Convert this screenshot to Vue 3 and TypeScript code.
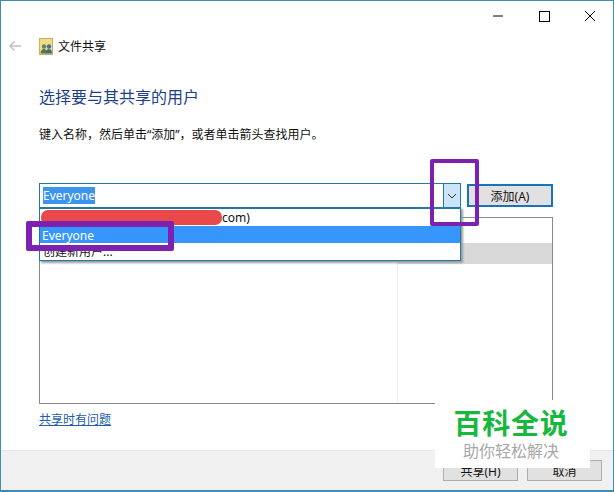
<template>
  <div class="window">
    <div class="title-bar">
      <svg class="win-btn" width="46" height="30" viewBox="0 0 46 30"><path d="M18 15h10" stroke="#000" stroke-width="1" fill="none" /></svg>
      <svg class="win-btn" width="46" height="30" viewBox="0 0 46 30"><rect x="18.5" y="10.5" width="10" height="10" stroke="#000" fill="none" /></svg>
      <svg class="win-btn" width="46" height="30" viewBox="0 0 46 30"><path d="M18 10l10 10M28 10l-10 10" stroke="#000" fill="none" /></svg>
    </div>
    <div class="nav-row">
      <svg class="back" width="14" height="12" viewBox="0 0 14 12"><path d="M13 6H2M6.5 1.5L2 6l4.5 4.5" stroke="#c4c0c4" stroke-width="1.6" fill="none" /></svg>
      <svg class="share-icon" width="14" height="17" viewBox="0 0 14 17">
        <rect x="0.5" y="0.5" width="13" height="16" fill="#f2dc8c" stroke="#c9b25c" />
        <circle cx="5" cy="8.500" r="2.200" fill="#6c7f63" />
        <circle cx="10" cy="8.500" r="2.200" fill="#4d6f86" />
        <path d="M1.500 15.500c0-3 1.500-4.500 3.500-4.500s3 1.500 3 4.500z" fill="#55794f" />
        <path d="M6.500 15.500c0-3 1.500-4.500 3.500-4.500s3 1.500 3 4.500z" fill="#3f6a88" />
      </svg>
      <span class="nav-title">文件共享</span>
    </div>
    <div class="content">
      <h1 class="heading">选择要与其共享的用户</h1>
      <p class="hint">键入名称，然后单击“添加”，或者单击箭头查找用户。</p>
      <div class="picker-row">
        <div class="combo">
          <span class="selected-text">Everyone</span>
          <div class="combo-arrow">
            <svg width="10" height="6" viewBox="0 0 10 6"><path d="M1 1l4 4 4-4" stroke="#333" fill="none" /></svg>
          </div>
          <div class="dropdown">
            <div class="option first">
              <span class="scribble"></span>
              <span>com)</span>
            </div>
            <div class="option active">Everyone</div>
            <div class="option cjk">创建新用户...</div>
          </div>
        </div>
        <button class="add-btn">添加(A)</button>
      </div>
      <div class="list-box">
        <div class="col-name"></div>
        <div class="col-level">
          <div class="row-blank"></div>
          <div class="row-gray"></div>
        </div>
      </div>
      <a class="help-link">共享时有问题</a>
    </div>
    <div class="footer">
      <button class="foot-btn">共享(H)</button>
      <button class="foot-btn">取消</button>
    </div>

    <!-- annotations painted over the screenshot -->
    <div class="mark mark-arrow"></div>
    <div class="mark mark-item"></div>
    <div class="watermark">
      <div class="wm-title">百科全说</div>
      <div class="wm-sub">助你轻松解决</div>
    </div>
  </div>
</template>

<script setup lang="ts">
</script>

<style>
html,
body {
  margin: 0;
  background: #fff;
}
</style>

<style scoped>
.window {
  position: relative;
  box-sizing: border-box;
  width: 614px;
  height: 492px;
  display: flex;
  flex-direction: column;
  border: 1px solid #3f8cae;
  border-bottom-width: 2px;
  background: #fff;
  overflow: hidden;
  font-family: "Noto Sans", "Noto Sans CJK SC", sans-serif;
  font-size: 12px;
  color: #111;
}

.title-bar {
  display: flex;
  justify-content: flex-end;
  height: 30px;
  flex-shrink: 0;
}

.nav-row {
  display: flex;
  align-items: center;
  height: 30px;
  padding-left: 7px;
}

.back {
  margin-right: 17px;
}

.share-icon {
  margin-right: 5px;
}

.nav-title {
  font-size: 12px;
}

.content {
  flex: 1;
  padding: 0 60px 0 38px;
  min-height: 0;
}

.heading {
  margin: 25px 0 0;
  font-size: 16px;
  line-height: 22px;
  font-weight: 400;
  color: #1e3f8a;
}

.hint {
  margin: 18px 0 0;
  line-height: 18px;
}

.picker-row {
  display: flex;
  align-items: flex-start;
  margin-top: 39px;
  width: 514px;
  gap: 6px;
}

.combo {
  position: relative;
  box-sizing: border-box;
  display: flex;
  align-items: center;
  width: 422px;
  height: 25px;
  flex-shrink: 0;
  border: 1px solid #1f7ba6;
  padding-left: 3px;
}

.selected-text {
  background: #3b94ee;
  color: #fff;
  line-height: 17px;
}

.combo-arrow {
  position: absolute;
  right: 0;
  top: 0;
  bottom: 0;
  width: 16px;
  display: flex;
  align-items: center;
  justify-content: center;
  background: #cce4f7;
  border-left: 1px solid #1f7ba6;
}

.dropdown {
  position: absolute;
  left: -1px;
  right: -1px;
  top: 23px;
  box-sizing: border-box;
  height: 54px;
  background: #fff;
  border: 1px solid #1f7ba6;
  border-top-width: 2px;
  box-shadow: 2px 2px 2px #9a9a9a;
  z-index: 2;
}

.option {
  box-sizing: border-box;
  display: flex;
  align-items: center;
  height: 17px;
  padding-left: 2px;
  line-height: 17px;
}

.option.first {
  padding-left: 1px;
}

.option.active {
  padding-top: 1px;
  background: #3696fb;
  color: #fff;
}

.option.cjk {
  padding-left: 3px;
}

.scribble {
  width: 181px;
  height: 15px;
  background: #e9494b;
  border-radius: 7px;
}

.add-btn {
  box-sizing: border-box;
  width: 86px;
  height: 23px;
  margin-top: 1px;
  border: 2px solid #1a73b8;
  background: #e1e1e1;
  font: inherit;
  color: #111;
  padding: 0;
}

.list-box {
  box-sizing: border-box;
  display: flex;
  width: 514px;
  height: 187px;
  margin-top: 9px;
  border: 1px solid #8a8a8a;
}

.col-name {
  width: 357px;
  border-right: 1px solid #eee;
}

.col-level {
  flex: 1;
}

.row-blank {
  height: 25px;
}

.row-gray {
  height: 21px;
  background: #d9d9d9;
}

.help-link {
  display: block;
  margin-top: 7px;
  line-height: 18px;
  color: #1c5ea8;
  text-decoration: underline;
}

.footer {
  box-sizing: border-box;
  display: flex;
  justify-content: flex-end;
  align-items: flex-start;
  gap: 9px;
  height: 40px;
  padding: 9px 11px 0 0;
  background: #f0f0f0;
  border-top: 1px solid #e6e6e6;
}

.foot-btn {
  box-sizing: border-box;
  width: 75px;
  height: 21px;
  padding: 0;
  border: 1px solid #adadad;
  background: #e1e1e1;
  font: inherit;
  color: #111;
}

.mark {
  position: absolute;
  box-sizing: border-box;
  border: 4px solid #7c22ae;
  border-radius: 2px;
  z-index: 3;
}

.mark-arrow {
  left: 429px;
  top: 158px;
  width: 49px;
  height: 67px;
}

.mark-item {
  left: 25px;
  top: 220px;
  width: 148px;
  height: 30px;
  border-width: 6px;
  box-shadow: inset 7px 0 0 #fff;
}

.watermark {
  position: absolute;
  left: 434px;
  top: 399px;
  box-sizing: border-box;
  width: 155px;
  height: 68px;
  padding-right: 3px;
  background: #fff;
  text-align: center;
  z-index: 4;
}

.wm-title {
  margin-top: 5px;
  font-size: 28px;
  line-height: 36px;
  font-weight: 700;
  letter-spacing: 0.7px;
  color: #17b83e;
}

.wm-sub {
  font-size: 16px;
  line-height: 20px;
  color: #a8a8a8;
}
</style>
